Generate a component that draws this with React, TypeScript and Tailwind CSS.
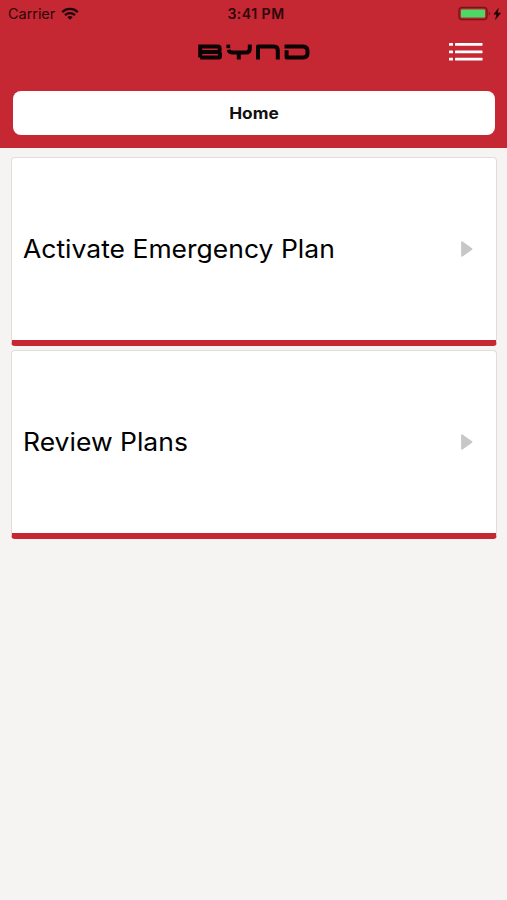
import React from "react";

function StatusBar() {
  return (
    <div className="grid h-7 grid-cols-3 items-center pl-[8px] pr-[5px] text-[14.5px] leading-7 text-[#2c070b]">
      <div className="flex items-center gap-[6px]">
        <span className="tracking-[-0.05px]">Carrier</span>
        <svg className="-mt-[1px]" width="18" height="14" viewBox="0 0 18 14" fill="none" stroke="#20060a" strokeWidth="2.3">
          <path d="M1.2 5.1a11.2 11.2 0 0 1 15.6 0" />
          <path d="M4 8.1a7.2 7.2 0 0 1 10 0" />
          <path d="M9 12.8 6.3 10.2a3.9 3.9 0 0 1 5.4 0z" fill="#20060a" stroke="none" />
        </svg>
      </div>
      <span className="whitespace-nowrap pl-[2px] text-center text-[14px] font-semibold tracking-[0.5px]">3:41 PM</span>
      <div className="flex items-center justify-end">
        <svg className="-mt-[1px]" width="44" height="16" viewBox="0 0 44 16">
          <rect x="1" y="1.5" width="28" height="12" rx="3" fill="#c52733" stroke="#78141c" strokeWidth="1.4" />
          <rect x="3" y="3.5" width="24" height="8" rx="1" fill="#4cd964" />
          <path d="M30.8 5.6c1.6.8 1.6 3.4 0 4.2z" fill="#78141c" />
          <path d="M40.8 1.5 35.4 8.5h3l-1.4 5.8 6.2-7.5h-3.4z" fill="#1d0406" />
        </svg>
      </div>
    </div>
  );
}

function Logo() {
  return (
    <svg width="112" height="16" viewBox="0 0 112 16" fill="none" stroke="#0c0304" strokeWidth="4" strokeLinejoin="round" aria-label="BYND">
      <path d="M2.2 13.5V2.5H20Q21.6 2.5 21.6 4V6.4L20.8 8 22 9.6V12Q22 13.5 20.5 13.5H2.2M2.2 8H21" strokeLinejoin="miter" />
      <path d="M30.8 5.8Q31.2 8.4 34 8.4H48Q51.8 8.4 51.8 4.4V.6M40.8 8.4V15.6" strokeLinejoin="miter" />
      <path d="M28.4 2.4h3.8" strokeWidth="3.6" />
      <path d="M60 15.5V2.5H76Q79.8 2.5 79.8 6.5V15.5" />
      <path d="M86.5 2.5H105Q109.5 2.5 109.5 7V9Q109.5 13.5 105 13.5H88.6V6.3" />
    </svg>
  );
}

function MenuIcon() {
  return (
    <svg width="34" height="20" viewBox="0 0 34 20" fill="#fff">
      {[1, 8.4, 15.8].map((y) => (
        <g key={y}>
          <rect x="0" y={y} width="4" height="2.8" rx=".5" />
          <rect x="6" y={y} width="27.5" height="2.8" rx=".5" />
        </g>
      ))}
    </svg>
  );
}

function PlanCard({ title }: { title: string }) {
  return (
    <button className="flex h-[189px] w-full items-center justify-between rounded-[4px] border border-b-[6px] border-[#dededd] border-b-[#c52733] bg-white pl-[11px] pr-[23px] text-left">
      <span className="origin-left scale-x-[1.06] whitespace-nowrap text-[25px] leading-8 text-black">{title}</span>
      <svg width="12" height="18" viewBox="0 0 12 18">
        <path d="M1 2.2 10.5 9 1 15.8z" fill="#c7c7c7" stroke="#c7c7c7" strokeWidth="1.8" strokeLinejoin="round" />
      </svg>
    </button>
  );
}

export default function App() {
  return (
    <div className="min-h-[900px] w-full bg-[#f5f4f2] font-['Inter',sans-serif]">
      <header className="h-[147.5px] bg-[#c52733]">
        <StatusBar />
        <div className="grid h-[48px] grid-cols-[1fr_112px_1fr] items-center">
          <span />
          <Logo />
          <div className="flex justify-end pr-[24px]">
            <MenuIcon />
          </div>
        </div>
        <div className="mt-[15.4px] px-[12.5px]">
          <div className="flex h-[44px] items-center justify-center rounded-[8px] bg-white text-[16px] font-bold text-[#111]">
            <span className="scale-x-[1.08]">Home</span>
          </div>
        </div>
      </header>
      <main className="flex flex-col gap-1 pl-[11px] pr-[10px] pt-[9.5px]">
        <PlanCard title="Activate Emergency Plan" />
        <PlanCard title="Review Plans" />
      </main>
    </div>
  );
}
